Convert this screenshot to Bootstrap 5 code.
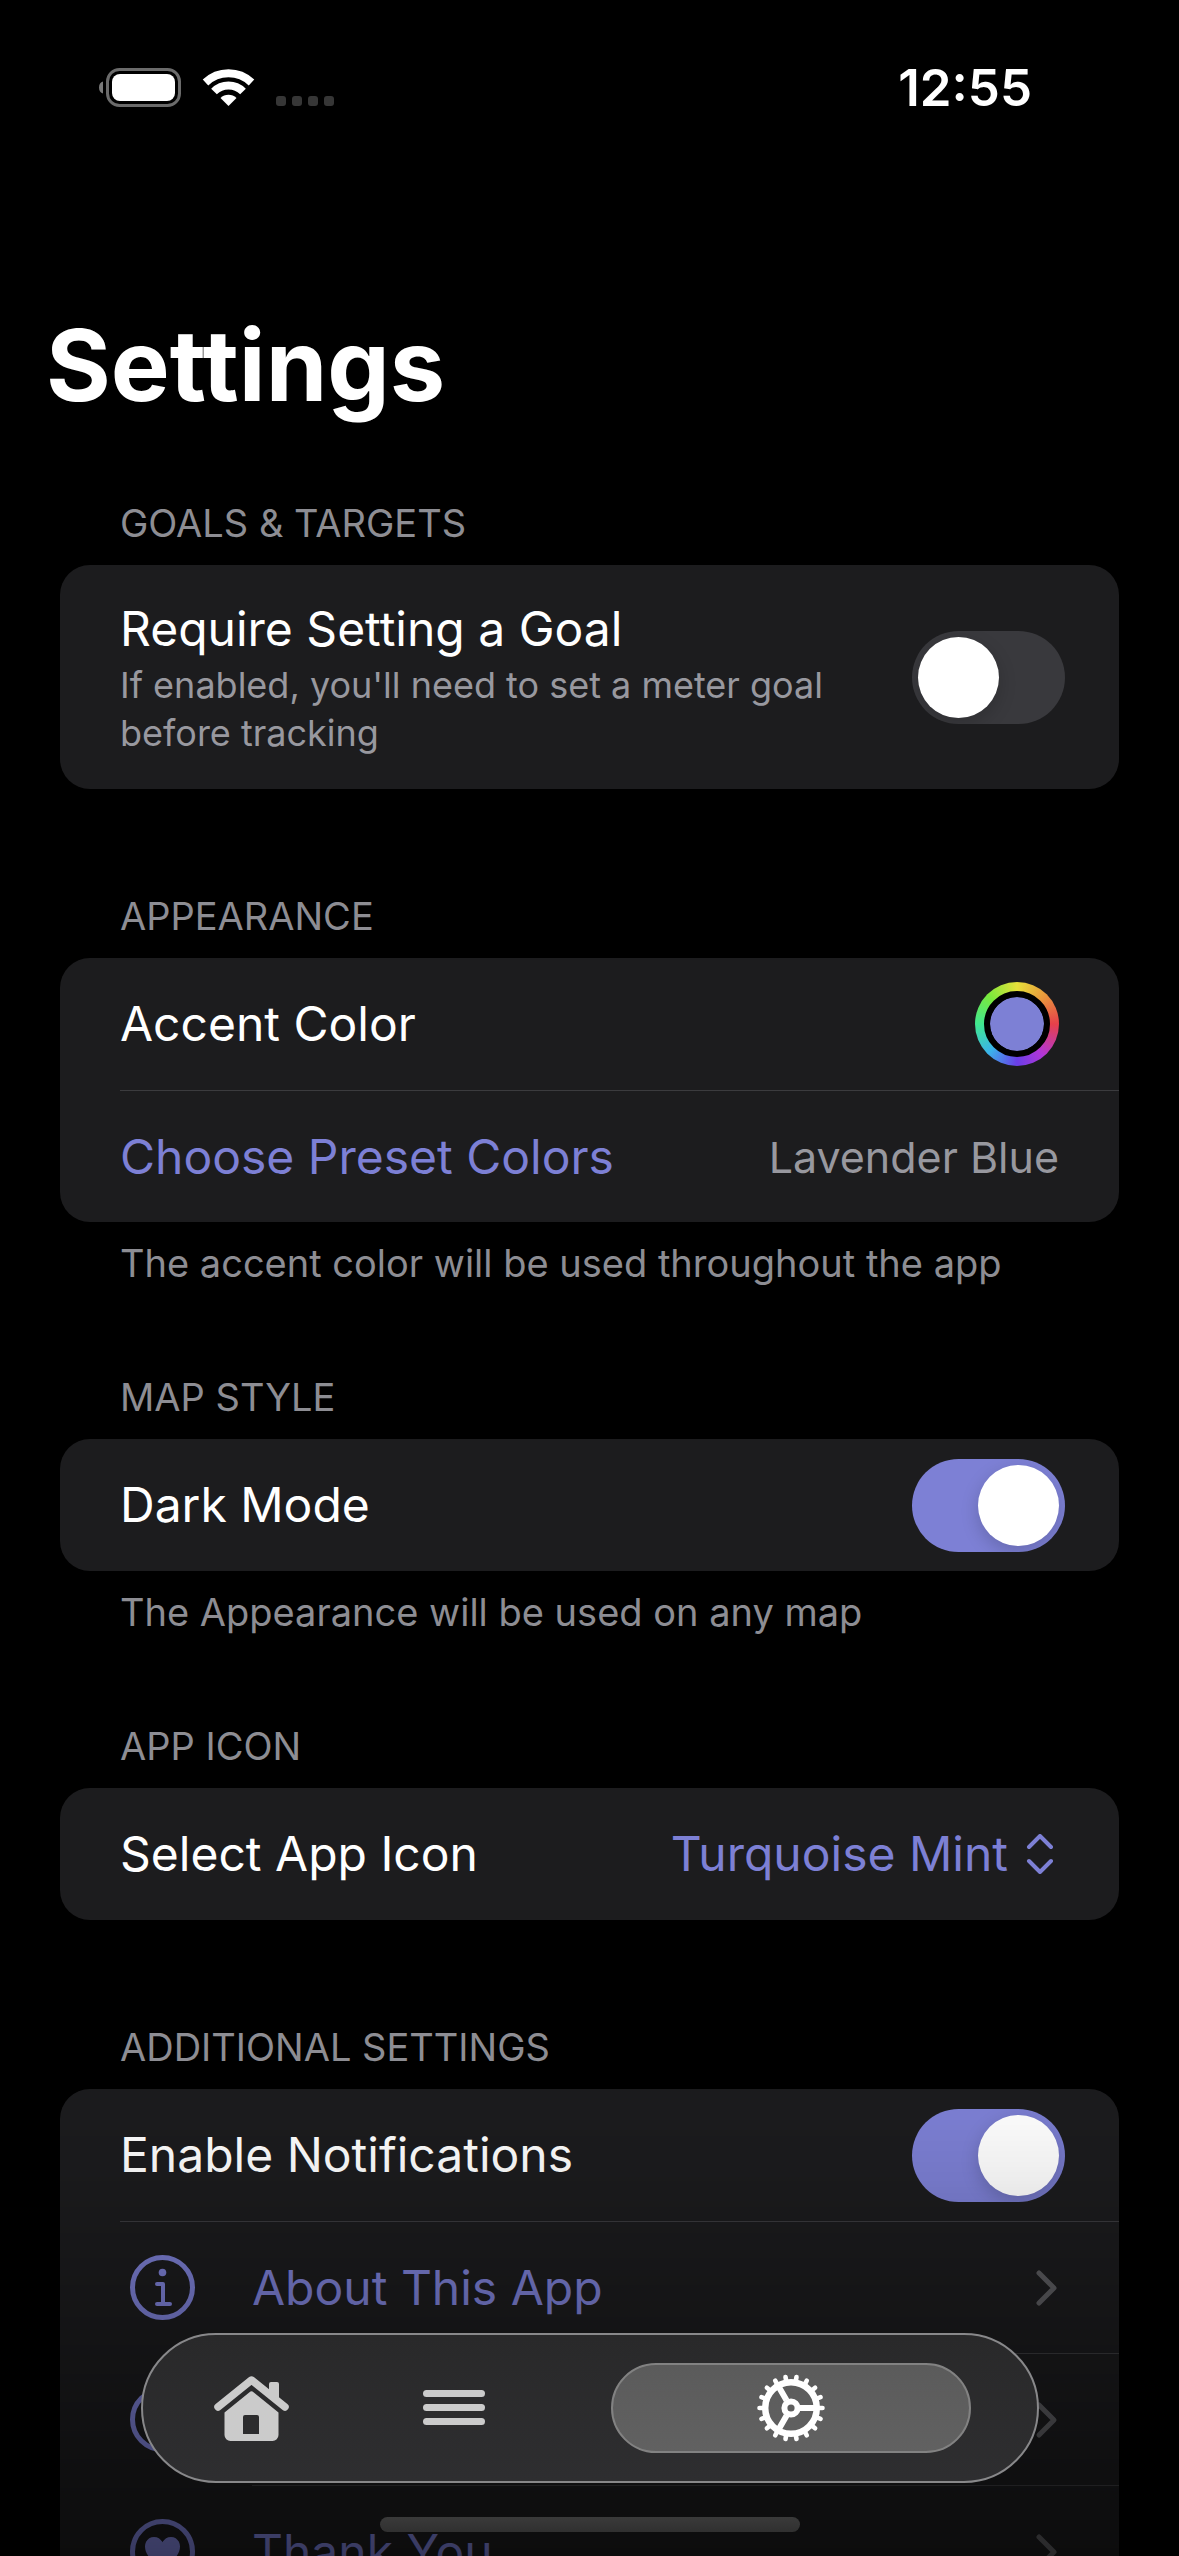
<!DOCTYPE html>
<html lang="en" data-bs-theme="dark">
<head>
<meta charset="utf-8">
<meta name="viewport" content="width=device-width, initial-scale=1">
<title>Settings</title>
<link href="https://cdn.jsdelivr.net/npm/bootstrap@5.3.0/dist/css/bootstrap.min.css" rel="stylesheet">
<style>
  :root { --accent: #7d80d5; --card: #1c1c1e; --line: #3b3b3e; --muted: #8d8d93; }
  body { background: #000; color: #fff; font-family: Inter, "Liberation Sans", sans-serif; font-size: 48px; line-height: 64px; }
  svg { display: block; flex: none; }
  .status-bar { height: 176px; padding: 0 147px 0 99px; font-size: 51px; font-weight: 600; }
  .page-title { font-size: 99px; line-height: 120px; font-weight: 700; margin: 129px 46px 74px; }
  .group { margin: 0 60px; }
  .group-head, .group-foot { font-size: 38px; line-height: 48px; color: var(--muted); font-weight: 400; margin: 0; padding: 0 60px; }
  .group-head { padding-bottom: 18px; }
  .group-foot { padding-top: 17px; }
  .gap-plain { margin-bottom: 103px; }
  .gap-foot { margin-bottom: 86px; }
  .panel { background: var(--card); border-radius: 30px; overflow: hidden; }
  .item { min-height: 132px; padding: 0 54px 0 0; margin-left: 60px; color: #fff; text-decoration: none; }
  .item.tall { padding-top: 32px; padding-bottom: 32px; }
  .item + .item { border-top: 1px solid var(--line); }
  .item + .item.inset { margin-left: 192px; }
  .item .lead-icon { width: 132px; padding-left: 10px; flex: none; }
  .item.inset .lead-icon { margin-left: -132px; }
  .hint { font-size: 36px; line-height: 48px; color: #98989f; }
  .accent, a.accent { color: var(--accent); }
  .end-pad { padding-right: 6px; }
  .value { font-size: 43px; color: #98989f; }
  .toggle.form-check-input { width: 153px; height: 93px; margin: 0; border: 0; border-radius: 47px; background: #39393d; flex: none; padding: 6px; display: flex; overflow: hidden; }
  .toggle.form-check-input::before { content: ""; width: 81px; height: 81px; border-radius: 50%; background: #fff; box-shadow: 0 6px 18px rgba(0,0,0,.18); }
  .toggle.form-check-input:checked { background: var(--accent); justify-content: flex-end; }
  .ring { width: 84px; height: 84px; padding: 9px; margin-right: 6px; flex: none;
    background: conic-gradient(#e6e03a, #e8963c 45deg, #e6404a 90deg, #b236d6 140deg, #6a3ee8 180deg, #3ab4ea 225deg, #40e890 270deg, #7ae83c 315deg, #e6e03a); }
  .well { appearance: none; width: 66px; height: 66px; padding: 0; border: 6px solid #000; border-radius: 50%; background: #000; display: block; }
  .well::-webkit-color-swatch-wrapper { padding: 0; }
  .well::-webkit-color-swatch { border: 0; border-radius: 50%; }
  .picker { appearance: none; background: none; border: 0; padding: 0; color: var(--accent); text-align-last: right; font: inherit; }
  .fade-out { height: 470px; pointer-events: none; background: linear-gradient(rgba(0,0,0,0), rgba(0,0,0,.07) 20%, rgba(0,0,0,.2) 40%, rgba(0,0,0,.55)); }
  .tab-dock { padding-bottom: 24px; }
  .tab-shell { width: 898px; max-width: 94%; height: 150px; padding: 0 66px 0 7px; border: 2px solid #88888a; border-radius: 75px; background: linear-gradient(#29292a, #2e2e30); }
  .tab { width: 203px; height: 90px; padding: 0; border: 0; background: none; color: #cbcbcb; display: flex; align-items: center; justify-content: center; }
  .tab.current { width: 360px; border: 2px solid #828282; border-radius: 45px; background: linear-gradient(#5b5b5b, #616161); color: #fff; }
  .home-bar { width: 420px; height: 15px; margin-top: 34px; border-radius: 8px; background: linear-gradient(#3a3a3a, #303030); }
</style>
<script src="https://cdn.jsdelivr.net/npm/bootstrap@5.3.0/dist/js/bootstrap.bundle.min.js"></script>
</head>
<body>
<div class="vh-100 overflow-hidden">
  <header class="status-bar d-flex align-items-center justify-content-between">
    <svg width="236" height="40" viewBox="0 0 236 40" aria-hidden="true">
      <path d="M4 13.500v12C1.500 25 0 22.500 0 19.500s1.500-5.500 4-6z" fill="#7a7a7a"/>
      <rect x="8.500" y="1.500" width="72" height="36" rx="12" fill="none" stroke="#6b6b6b" stroke-width="3"/>
      <rect x="13" y="6" width="63" height="27" rx="8" fill="#fff"/>
      <g fill="none" stroke="#fff">
        <path d="M106.500 14.500a33.300 33.300 0 0 1 46 0" stroke-width="8"/>
        <path d="M115 23.500a20.500 20.500 0 0 1 29 0" stroke-width="8"/>
      </g>
      <path d="M129.500 38l-8-8a11.500 11.500 0 0 1 16 0z" fill="#fff"/>
      <g fill="#363636"><rect x="177" y="28" width="10" height="10" rx="3"/><rect x="193" y="28" width="10" height="10" rx="3"/><rect x="209" y="28" width="10" height="10" rx="3"/><rect x="225" y="28" width="10" height="10" rx="3"/></g>
    </svg>
    <time>12:55</time>
  </header>

  <main>
    <h1 class="page-title">Settings</h1>

    <section class="group gap-plain">
      <h2 class="group-head">GOALS &amp; TARGETS</h2>
      <div class="panel">
        <div class="item tall d-flex align-items-center justify-content-between">
          <label for="goal" class="pe-5">Require Setting a Goal<span class="hint d-block">If enabled, you'll need to set a meter goal<br>before tracking</span></label>
          <input class="form-check-input toggle" type="checkbox" role="switch" id="goal">
        </div>
      </div>
    </section>

    <section class="group gap-foot">
      <h2 class="group-head">APPEARANCE</h2>
      <div class="panel">
        <div class="item d-flex align-items-center justify-content-between">
          <label for="tint">Accent Color</label>
          <div class="ring rounded-circle"><input class="well" type="color" id="tint" value="#7d80d5"></div>
        </div>
        <a href="#presets" class="item d-flex align-items-center justify-content-between">
          <span class="accent">Choose Preset Colors</span>
          <span class="value end-pad">Lavender Blue</span>
        </a>
      </div>
      <p class="group-foot">The accent color will be used throughout the app</p>
    </section>

    <section class="group gap-foot">
      <h2 class="group-head">MAP STYLE</h2>
      <div class="panel">
        <div class="item d-flex align-items-center justify-content-between">
          <label for="dark">Dark Mode</label>
          <input class="form-check-input toggle" type="checkbox" role="switch" id="dark" checked>
        </div>
      </div>
      <p class="group-foot">The Appearance will be used on any map</p>
    </section>

    <section class="group gap-plain">
      <h2 class="group-head">APP ICON</h2>
      <div class="panel">
        <div class="item d-flex align-items-center justify-content-between">
          <label for="icon">Select App Icon</label>
          <div class="d-flex align-items-center accent end-pad">
            <select class="picker" id="icon"><option>Turquoise Mint</option></select>
            <svg class="ms-3" width="35" height="40" viewBox="0 0 35 40" fill="none" stroke="currentColor" stroke-width="4" stroke-linecap="round" stroke-linejoin="round" aria-hidden="true"><path d="M5 13L16 2l11 11M5 27l11 11 11-11"/></svg>
          </div>
        </div>
      </div>
    </section>

    <section class="group">
      <h2 class="group-head">ADDITIONAL SETTINGS</h2>
      <div class="panel">
        <div class="item d-flex align-items-center justify-content-between">
          <label for="notify">Enable Notifications</label>
          <input class="form-check-input toggle" type="checkbox" role="switch" id="notify" checked>
        </div>
        <a href="#about" class="item accent d-flex align-items-center">
          <span class="lead-icon"><svg width="65" height="65" viewBox="0 0 65 65" fill="none" stroke="currentColor" stroke-width="4" stroke-linecap="round" stroke-linejoin="round" aria-hidden="true"><circle cx="32.500" cy="32.500" r="30" stroke-width="5"/><path d="M27 29h6v20M27 49h13"/><circle cx="32.500" cy="17.500" r="3.800" fill="currentColor" stroke="none"/></svg></span>
          <span class="flex-grow-1">About This App</span>
          <svg class="end-pad" width="30" height="40" viewBox="0 0 24 40" fill="none" stroke="#5c5c60" stroke-width="5" stroke-linecap="round" stroke-linejoin="round" aria-hidden="true"><path d="M4 5l15 15L4 35"/></svg>
        </a>
        <a href="#more" class="item inset accent d-flex align-items-center justify-content-between" aria-label="More">
          <span class="lead-icon"><svg width="65" height="65" viewBox="0 0 65 65" fill="none" stroke="currentColor" stroke-width="5" aria-hidden="true"><circle cx="32.500" cy="32.500" r="30"/></svg></span>
          <svg class="end-pad" width="30" height="40" viewBox="0 0 24 40" fill="none" stroke="#5c5c60" stroke-width="5" stroke-linecap="round" stroke-linejoin="round" aria-hidden="true"><path d="M4 5l15 15L4 35"/></svg>
        </a>
        <a href="#thanks" class="item inset accent d-flex align-items-center">
          <span class="lead-icon"><svg width="65" height="65" viewBox="0 0 65 65" aria-hidden="true"><circle cx="32.500" cy="32.500" r="30" fill="none" stroke="currentColor" stroke-width="5"/><path d="M32.500 50C24 44 15 36.500 15 27.500c0-5.500 4-9.500 9-9.500 3.800 0 6.800 2 8.500 5.300C34.200 20 37.200 18 41 18c5 0 9 4 9 9.500C50 36.500 41 44 32.500 50z" fill="currentColor"/></svg></span>
          <span class="flex-grow-1">Thank You</span>
          <svg class="end-pad" width="30" height="40" viewBox="0 0 24 40" fill="none" stroke="#5c5c60" stroke-width="5" stroke-linecap="round" stroke-linejoin="round" aria-hidden="true"><path d="M4 5l15 15L4 35"/></svg>
        </a>
      </div>
    </section>
  </main>
</div>

<div class="fade-out fixed-bottom"></div>
<div class="tab-dock fixed-bottom d-flex flex-column align-items-center">
  <nav class="tab-shell d-flex align-items-center" aria-label="Main">
    <button type="button" class="tab" aria-label="Home">
      <svg width="75" height="65" viewBox="0 0 75 65" aria-hidden="true">
        <path d="M4 31L37.500 4 71 31" fill="none" stroke="currentColor" stroke-width="7.500" stroke-linecap="round" stroke-linejoin="round"/>
        <path d="M55 20V8a2 2 0 0 1 2-2h6a2 2 0 0 1 2 2v17z" fill="currentColor"/>
        <path fill-rule="evenodd" d="M35.500 16.200a3 3 0 0 1 4 0L64.500 36.500V59a6 6 0 0 1-6 6h-42a6 6 0 0 1-6-6V36.500zM31 39a2 2 0 0 0-2 2v17h16V41a2 2 0 0 0-2-2z" fill="currentColor"/>
      </svg>
    </button>
    <button type="button" class="tab" aria-label="List">
      <svg width="62" height="36" viewBox="0 0 62 36" fill="currentColor" aria-hidden="true"><rect width="62" height="7" rx="3.500"/><rect y="14" width="62" height="7" rx="3.500"/><rect y="28" width="62" height="7" rx="3.500"/></svg>
    </button>
    <button type="button" class="tab current ms-auto" aria-label="Settings" aria-current="page">
      <svg width="68" height="68" viewBox="-34 -34 68 68" fill="none" stroke="currentColor" aria-hidden="true">
        <circle r="25.800" stroke-width="6.500"/>
        <circle r="6.600" stroke-width="6"/>
        <path d="M9 0H24M-4.500 7.800L-12 20.800M-4.500-7.800L-12-20.800" stroke-width="6"/>
        <path stroke-width="4.600" stroke-linecap="round" d="M28 0H31.500M-28 0H-31.500M26.300 9.600L29.600 10.800M26.300-9.600L29.600-10.800M-26.300 9.600L-29.600 10.800M-26.300-9.600L-29.600-10.800M21.400 18L24.100 20.200M21.400-18L24.100-20.200M-21.400 18L-24.100 20.200M-21.400-18L-24.100-20.200M14 24.200L15.800 27.300M14-24.200L15.800-27.300M-14 24.200L-15.800 27.300M-14-24.200L-15.800-27.300M4.900 27.600L5.500 31M4.900-27.600L5.500-31M-4.900 27.600L-5.500 31M-4.900-27.600L-5.500-31"/>
      </svg>
    </button>
  </nav>
  <div class="home-bar"></div>
</div>
</body>
</html>
